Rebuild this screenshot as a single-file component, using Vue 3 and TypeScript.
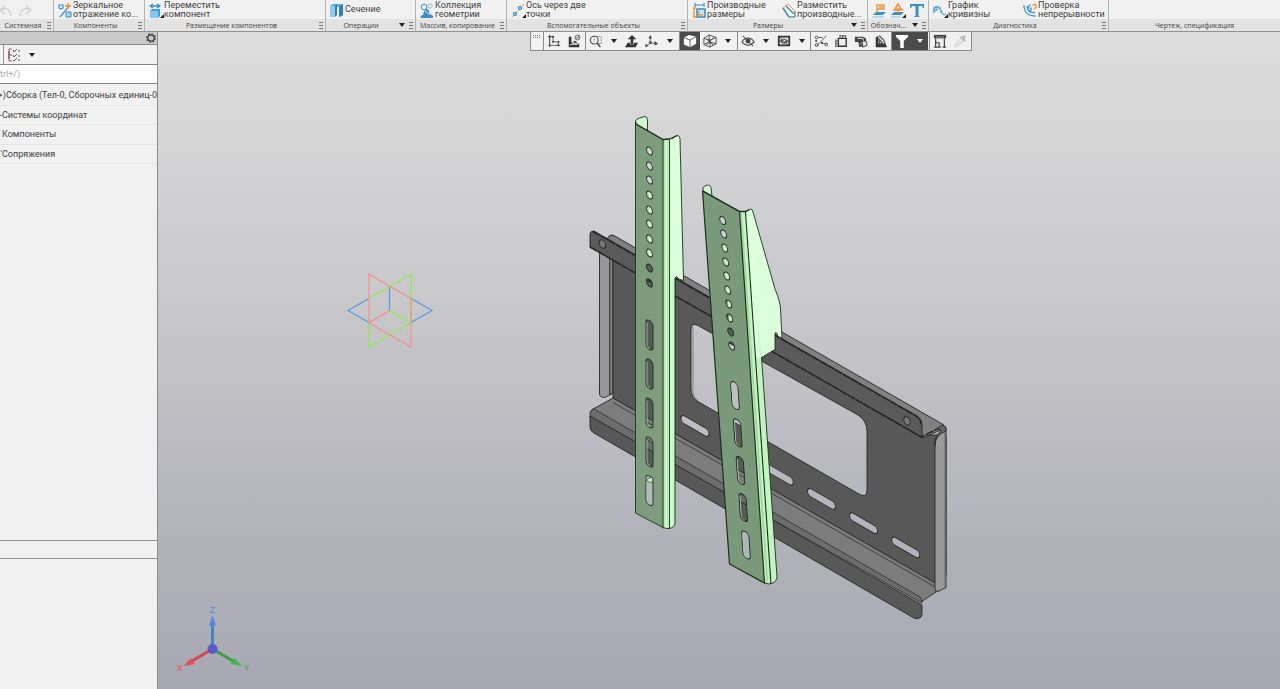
<script setup lang="ts">
import { ref } from 'vue'

interface Command { icon: string; lines: string[]; corner?: boolean }
interface Group { title: string; commands: Command[]; menu?: boolean; handle?: boolean; kind?: string }
interface Tool { icon: string; label: string; menu?: boolean; kind?: string }

const blue = '#3c8fc6'
const orange = '#f0953a'

const icons: Record<string, string> = {
  undo: '<path d="M5 4 0 8l5 4M0 8c6-3 10-1 11 6" fill="none" stroke="#cfcfcf" stroke-width="1.3"/>',
  redo: '<path d="M8 4l5 4-5 4M13 8C7 5 3 7 2 14" fill="none" stroke="#cfcfcf" stroke-width="1.3"/>',
  mirror: `<path d="M1 3h4v3l-2 1-2-1zM2 15 12 3" fill="none" stroke="${blue}" stroke-width="1.200"/><path d="M8 10h5v5H8z" fill="#a7d6ee" stroke="${blue}"/><path d="M7 4h6M10 1v6" stroke="${orange}" stroke-width="1.400"/>`,
  move: `<path d="M1 4h10M4 2 1 4l3 2M8 2l3 2-3 2" fill="none" stroke="${blue}" stroke-width="1.300"/><path d="M1 9l2-2h8v7l-2 2H1z" fill="#3c9fdb"/><path d="M1 9h8v7H1z" fill="#86c9ef"/>`,
  section: '<path d="M0 4l3-2h10v11l-3 2V5H4v10H0z" fill="#57aede"/><path d="M0 4h5v11H0z" fill="#8fcdf0"/><path d="M5 4l2-2v11l-2 2zM9 5l4-3v11l-4 2z" fill="#2f7fb4"/>',
  collection: `<circle cx="4" cy="5" r="2.800" fill="none" stroke="${blue}"/><circle cx="10" cy="4" r="2.200" fill="none" stroke="#8fbedc"/><path d="M4 9c2-4 6-1 5 2l4 3v2H1c-1-2 0-3 2-3z" fill="${blue}"/><path d="M4 8l6 5" stroke="#d3ecfa"/>`,
  axis: `<path d="M1 15 13 2" stroke="${orange}"/><circle cx="4" cy="12" r="1.700" fill="#8ecbf0" stroke="${blue}"/><circle cx="9" cy="6" r="1.700" fill="#8ecbf0" stroke="${blue}"/>`,
  derived: `<path d="M3 1v4M12 1v4M3 3h9" fill="none" stroke="${blue}" stroke-width="1.200"/><path d="M5 7h8v8H5z" fill="#c7e5f6" stroke="${blue}" stroke-width="1.600"/><path d="M1 6h3M1 15h3M2 6v9M7 9v4h4" fill="none" stroke="${orange}" stroke-width="1.400"/>`,
  place: `<path d="M1 6 6 2l7 7v6H7z" fill="#fff" stroke="${orange}"/><path d="M1 6l6 9M4 4l8 8" stroke="${blue}" stroke-width="1.500"/><path d="M7 15l6 0V9" fill="none" stroke="${blue}"/>`,
  base: `<path d="M1 13l3-3h10l-3 3z" fill="${blue}"/><path d="M0 15h12" stroke="#80bfdf"/><path d="M5 10V3h7v4H5M7 5h4" fill="none" stroke="${orange}" stroke-width="1.400"/>`,
  weld: `<path d="M0 13l3-3h10l-3 3z" fill="${blue}"/><path d="M0 15h9" stroke="#80bfdf"/><path d="M2 8h10M7 2 4 7h6zM7 8v3" fill="none" stroke="${orange}" stroke-width="1.600"/>`,
  textmark: `<path d="M0 2h14v4h-1l-1-2H8.500v10l2 1h-7l2-1V4H2L1 6H0z" fill="${blue}"/>`,
  graph: `<path d="M0 11c2-8 5-8 8-2s4 3 5 3M0 7c5-6 7 0 9 3M0 11l4-4m0-2v4m3-4 1 6" fill="none" stroke="#68abd5" stroke-width="1.300"/>`,
  check: `<path d="M1 3c0 8 4 11 12 11M4 4c0 5 3 7 8 7M8 3c-4 0-4 6-1 6h1V6H6" fill="none" stroke="${blue}" stroke-width="1.200"/><path d="M10 4c0-3 4-2 3 1l-2 2m0 2v1" fill="none" stroke="${orange}" stroke-width="1.400"/>`,
  sketch: '<path d="M3 3v10h10V9H7V3zM1 3h5M3 1v14M11 13h4" fill="none" stroke="#555"/><path d="M2 2h2v2H2zM6 2h2v2H6zM2 12h2v2H2zM12 12h2v2h-2zM6 8h2v2H6zM12 8h2v2h-2z" fill="#444"/>',
  part: '<path d="M2 3h3v6l2 2h7v4H2zM7 8h3l2 2H8z" fill="#333"/><path d="M4 12h8M4 13l1-2" stroke="#ddd"/><circle cx="12" cy="4" r="2.800" fill="none" stroke="#555"/><path d="M10 4l2 1 2-3" fill="none" stroke="#444"/>',
  zoom: '<circle cx="6" cy="7" r="4.500" fill="none" stroke="#444" stroke-width="1.200"/><path d="M9 10l4 5" stroke="#444" stroke-width="1.600"/><path d="M8 3h6v8h-3M6 5v4" fill="none" stroke="#777" stroke-dasharray="2 1"/>',
  normal: '<path d="M3 10h12l-3 5H0z" fill="#333"/><path d="M8 12V5" stroke="#eee" stroke-width="4.500"/><path d="M8 12V5" stroke="#333" stroke-width="3"/><path d="M3 6l5-5 5 5z" fill="#333"/>',
  axes: '<path d="M6 10V3M6 10l7 1M6 10l-4 4" stroke="#555" fill="none"/><path d="M4 5l2-4 2 4zM11 8l4 3-4 2zM1 11l3 2-4 2z" fill="#444"/><circle cx="6" cy="10" r="1.700" fill="#555"/>',
  cube: '<path d="M1 4 7 1l8 2v8l-7 4-7-3z" fill="#fff"/><path d="M1 4l7 3 7-4M8 7v8" fill="none" stroke="#4a4a4a"/>',
  wirecube: '<path d="M1 5 7 1l8 3v7l-7 4-7-3zM1 5l7 2 7-3M8 7v8M1 12l6-3 8 2M7 9V1M4 6l8 7M12 4 4 13" fill="none" stroke="#444"/>',
  hide: '<path d="M1 9c4-6 10-6 14 0-4 5-10 5-14 0M2 2l12 12" fill="none" stroke="#444" stroke-width="1.200"/><circle cx="8" cy="8" r="2.800" fill="#444"/>',
  show: '<path d="M2 3h12v10H2z" fill="#e8e8e8" stroke="#333" stroke-width="2"/><path d="M3 8c3-4 7-4 10 0-3 4-7 4-10 0z" fill="#555"/><circle cx="8" cy="8" r="1.700" fill="#eee"/><path d="M2 3l11 10" stroke="#333"/>',
  constraint: '<path d="M3 14 14 2M9 11h5M5 4h5" stroke="#555" fill="none"/><circle cx="3" cy="4" r="1.600" fill="none" stroke="#444"/><circle cx="2.500" cy="8" r="1.200" fill="#444"/><circle cx="3" cy="12.500" r="1.600" fill="none" stroke="#444"/><circle cx="9" cy="10" r="1.200" fill="#444"/><circle cx="14" cy="12" r="1.600" fill="none" stroke="#444"/>',
  layers: '<path d="M5 5h9v9H5z" fill="#eee" stroke="#333" stroke-width="1.500"/><path d="M7 5V2m3 3V2m3 3V2M5 8H2m3 3H2m3 3H2M6 2h8M2 6v9" stroke="#444"/>',
  package: '<path d="M1 3h9l4 2-2 8-6 2-1-6H1z" fill="#444"/><path d="M4 5h6l1 3-4 4" fill="none" stroke="#fff"/><path d="M9 8h5l1 5-5 2z" fill="#ddd" stroke="#333"/>',
  corner: '<path d="M2 4l3-2v9h8l2 4H2z" fill="#333"/><path d="M6 2l5 5 2 5M6 6l4 5H6z" fill="none" stroke="#555" stroke-width="1.500"/>',
  funnel: '<path d="M1 1h14v2l-5 5v8H6V8L1 3z" fill="#fff"/>',
  measure: '<path d="M1 1h14v4H1z" fill="#444"/><path d="M13 5v10M11 15h4M3 5v10M1 15h8M3 10h4v5" fill="none" stroke="#444" stroke-width="1.400"/><path d="M4 3v1m2-1v1m2-1v1m2-1v1m2-1v1" stroke="#ddd"/>',
  dropper: '<path d="M2 15l1-4 7-7 3 3-7 6z" fill="#e8e8e8" stroke="#ccc"/><path d="M9 3l5 5M11 5l3-3" stroke="#b8b8b8" stroke-width="2.500"/>',
}

const groups: Group[] = [
  { title: 'Системная', kind: 'system', handle: true, commands: [{ icon: 'undo', lines: [] }, { icon: 'redo', lines: [] }] },
  { title: 'Компоненты', handle: true, commands: [{ icon: 'mirror', lines: ['Зеркальное', 'отражение ко...'] }] },
  { title: 'Размещение компонентов', handle: true, commands: [{ icon: 'move', lines: ['Переместить', 'компонент'], corner: true }] },
  { title: 'Операции', handle: true, menu: true, commands: [{ icon: 'section', lines: ['Сечение'] }] },
  { title: 'Массив, копирование', handle: true, commands: [{ icon: 'collection', lines: ['Коллекция', 'геометрии'] }] },
  { title: 'Вспомогательные объекты', handle: true, commands: [{ icon: 'axis', lines: ['Ось через две', 'точки'], corner: true }] },
  { title: 'Размеры', handle: true, menu: true, kind: 'double', commands: [{ icon: 'derived', lines: ['Производные', 'размеры'] }, { icon: 'place', lines: ['Разместить', 'производные...'] }] },
  { title: 'Обознач...', handle: true, menu: true, kind: 'marks', commands: [{ icon: 'base', lines: [] }, { icon: 'weld', lines: [], corner: true }, { icon: 'textmark', lines: [] }] },
  { title: 'Диагностика', handle: true, kind: 'double', commands: [{ icon: 'graph', lines: ['График', 'кривизны'], corner: true }, { icon: 'check', lines: ['Проверка', 'непрерывности'] }] },
  { title: 'Чертеж, спецификация', commands: [] },
]

const toolSets: Tool[][] = [
  [{ icon: 'sketch', label: 'Эскиз' }, { icon: 'part', label: 'Деталь' }],
  [{ icon: 'zoom', label: 'Масштаб', menu: true }, { icon: 'normal', label: 'Нормально к' }, { icon: 'axes', label: 'Ориентация', menu: true }],
  [{ icon: 'cube', label: 'Полутоновое', kind: 'dark' }, { icon: 'wirecube', label: 'Каркас', menu: true }],
  [{ icon: 'hide', label: 'Скрыть', menu: true }, { icon: 'show', label: 'Показать', menu: true }],
  [{ icon: 'constraint', label: 'Ограничения' }, { icon: 'layers', label: 'Слои' }, { icon: 'package', label: 'Упаковка' }, { icon: 'corner', label: 'Сечение модели' }],
  [{ icon: 'funnel', label: 'Фильтр', menu: true, kind: 'dark' }],
  [{ icon: 'measure', label: 'Измерить' }, { icon: 'dropper', label: 'Пипетка' }],
]

const tree = [
  { mark: '➝)', text: 'Сборка (Тел-0, Сборочных единиц-0)' },
  { mark: '-', text: 'Системы координат' },
  { mark: '', text: 'Компоненты' },
  { mark: '′', text: 'Сопряжения' },
]

const query = ref('')

const leftHoles = [151, 166, 180, 195, 210, 224, 239, 253, 268, 283].map((y, i) => ({ x: 649.5, y, lit: i > 2 && i < 8 }))
const leftSlots = [335, 374, 413, 452, 490.5].map((y) => ({ x: 649.5, y }))
const rightHoles = [220.5, 234, 248, 262, 276, 290, 304, 318, 332, 346].map((y, i) => ({ x: 722.7 + i, y, lit: i > 1 && i < 8 }))
const rightSlots = [395.5, 433, 470.5, 507.5, 545].map((y, i) => ({ x: 735 + i * 2.75, y }))
const plateSlots = [0, 2, 3, 4, 5].map((i) => ({ x: 695 + i * 42.15, y: 426 + i * 24.3 }))
const windowPath = 'M691 330Q691 322 698 325.500L858 415Q867 421 867 431V490Q867 499 858 493.500L697 401Q691 397 691 389Z'
</script>

<template>
  <div class="app">
    <header class="ribbon">
      <section v-for="g in groups" :key="g.title" class="group" :class="g.kind">
        <div class="commands">
          <button v-for="c in g.commands" :key="c.icon" class="command" type="button" :aria-label="c.lines.join(' ') || c.icon">
            <span class="glyph">
              <svg viewBox="0 0 14 16" aria-hidden="true" v-html="icons[c.icon]"></svg>
              <i v-if="c.corner" class="corner"></i>
            </span>
            <span v-if="c.lines.length" class="caption">
              <span v-for="l in c.lines" :key="l">{{ l }}</span>
            </span>
          </button>
        </div>
        <div class="title">
          <span class="name">{{ g.title }}</span>
          <button v-if="g.menu" class="arrow" type="button" :aria-label="g.title"></button>
          <i v-if="g.handle" class="handle"></i>
        </div>
      </section>
    </header>

    <div class="body">
      <aside class="side">
        <div class="side-head">
          <button type="button" class="gear" aria-label="Настройка">
            <svg viewBox="0 0 12 12"><circle cx="6" cy="6" r="3.200" fill="none" stroke="#333" stroke-width="1.200" /><circle cx="6" cy="6" r="4.300" fill="none" stroke="#333" stroke-width="1.200" stroke-dasharray="1.500 1.877" /></svg>
          </button>
        </div>
        <div class="side-tools">
          <button type="button" class="treemode" aria-label="Вид дерева">
            <svg viewBox="0 0 14 14"><path d="M1 1v12M1 1h3M1 7h3M1 13h3" fill="none" stroke="#a55" /><path d="M1 3v8" stroke="#555" /><path d="M5 2l1 2 3-3M5 7l1 2 3-3M5 12l1 1 3-3" fill="none" stroke="#555" /><path d="M10 3h3M10 8h3M10 12h3" stroke="#555" stroke-dasharray="2 1" /></svg>
          </button>
          <button type="button" class="arrow" aria-label="Список"></button>
        </div>
        <input v-model="query" class="search" type="text" placeholder="trl+/)" aria-label="Поиск" />
        <ul class="tree">
          <li v-for="t in tree" :key="t.text"><span class="mark">{{ t.mark }}</span>{{ t.text }}</li>
        </ul>
        <div class="splitter"></div>
        <div class="props"></div>
      </aside>

      <main class="view">
        <svg class="scene" viewBox="158 32 1122 657" role="img" aria-label="Модель сборки">
          <defs>
            <linearGradient id="edgeL" x1="0" x2="1" y1="0" y2="0">
              <stop offset="0" stop-color="#8db58d" /><stop offset=".25" stop-color="#c9fcc9" /><stop offset=".5" stop-color="#b6eab6" /><stop offset=".62" stop-color="#d4ffd4" /><stop offset="1" stop-color="#bdf0bd" />
            </linearGradient>
            <mask id="plateCut" maskUnits="userSpaceOnUse" x="580" y="220" width="380" height="410">
              <path d="M580 220h380v410H580z" fill="#fff" />
              <path :d="windowPath" fill="#000" />
              <rect v-for="s in plateSlots" :key="s.x" x="-14" y="-4" width="28" height="8" rx="4" fill="#000" :transform="`translate(${s.x} ${s.y}) skewY(30)`" />
            </mask>
            <mask id="leftCut" maskUnits="userSpaceOnUse" x="630" y="110" width="60" height="430">
              <path d="M630 110h60v430h-60z" fill="#fff" />
              <ellipse v-for="h in leftHoles" :key="h.y" rx="3" ry="3.700" fill="#000" :transform="`translate(${h.x} ${h.y}) skewY(30)`" />
              <rect v-for="s in leftSlots" :key="s.y" x="-3.500" y="-14.500" width="7" height="29" rx="3.500" fill="#000" :transform="`translate(${s.x} ${s.y}) skewY(30)`" />
            </mask>
            <mask id="rightCut" maskUnits="userSpaceOnUse" x="695" y="180" width="95" height="410">
              <path d="M695 180h95v410h-95z" fill="#fff" />
              <ellipse v-for="h in rightHoles" :key="h.y" rx="3" ry="3.700" fill="#000" :transform="`translate(${h.x} ${h.y}) skewY(30)`" />
              <rect v-for="s in rightSlots" :key="s.y" x="-3.500" y="-13.500" width="7" height="27" rx="3.500" fill="#000" :transform="`translate(${s.x} ${s.y}) rotate(-4) skewY(30)`" />
            </mask>
          </defs>

          <!-- origin planes -->
          <g fill="none" stroke-width="1.200">
            <path d="M369 298.500 348 310.500l21 12M411 298.500l21 12-21 12M389.500 286v24.500" stroke="#559be8" />
            <path d="M369 298.500 411 274v49l-42 24v-24M389.500 310.500l21.500 12.500" stroke="#8fec48" />
            <path d="M369 323V274l42 24.500V347l-42-24 20.500-12.500" stroke="#f58f8f" />
          </g>

          <!-- wall plate -->
          <g stroke="#262626" stroke-width=".9" stroke-linejoin="round">
            <path d="M599.500 250v144q1 4 5 3.500l8-4V255z" fill="#969696" />
            <path d="M609.500 255v139.500l3.500-1.500V257z" fill="#787878" stroke-width=".7" />
            <g mask="url(#plateCut)">
              <path d="M613 257l308 178h25v140l-11 8.500L613 398z" fill="#585858" />
            </g>
            <path :d="windowPath" fill="none" />
            <path d="M693 327v64q0 6 5 9.500" fill="none" stroke="#666" stroke-width=".7" />
            <rect v-for="s in plateSlots" :key="s.x" x="-14" y="-4" width="28" height="8" rx="4" fill="none" :transform="`translate(${s.x} ${s.y}) skewY(30)`" />
            <path d="M607 239q2-5 6-4l331 190-3 5-19 8z" fill="#808080" />
            <path d="M590 234q0-3 4-3l323 185q5 3 5 8v13L590 247z" fill="#5a5a5a" />
            <path d="M593 231.500 917 416.500q4 3 4 8" fill="none" stroke-width="1.500" stroke-dasharray="8 1" />
            <path d="M590 247 921 437l22-11" fill="none" stroke-width="1.500" stroke-dasharray="8 1" />
            <ellipse rx="3.200" ry="4" fill="#777" transform="translate(602.500 244) skewY(25)" />
            <ellipse rx="3.200" ry="4" fill="#777" transform="translate(907 421) skewY(25)" />
            <path d="M613 398 936 583.500V592l-15 10L590 413q1-4 5-5z" fill="#7c7c7c" />
            <path d="M613 402.500 936 587.500" fill="none" stroke-width=".7" />
            <path d="M590 413q1-3 4-4L920 597q2 2 2 5v1L590 418z" fill="#6c6c6c" stroke-width=".7" />
            <path d="M590 416 917 602q4 2 5 3v10q-2 5-8 3L594 433q-4-2-4-6z" fill="#585858" />
            <path d="M935 584V440q1-6 6-8l5-3v158.500l-8 4q-3 0-3-3z" fill="#999" />
            <path d="M945 430v157" stroke="#666" />
            <path d="M935 446q0-11 11-15v-4l-4-2-5 4q4 0 4 2-5 3-6 10" fill="#666" />
          </g>

          <!-- left bracket -->
          <g stroke="#1d301d" stroke-width=".9" stroke-linejoin="round">
            <path d="M635.500 128v-7q1-2 4-3l5-1.500q2.500 0 3 3V130z" fill="#cff8cf" />
            <path d="M670 140l7-4.500q2.500 0 3 3l3.500 142-5-1.500q-2-4-3.500-1V300H670z" fill="#dcffdc" />
            <path d="M662.500 139.500h7q5-1 5.500 3v382q-2 5-8 4.500l-4.500-1z" fill="url(#edgeL)" stroke="none" />
            <path d="M669 139h7l-1 139h-6z" fill="#dcffdc" stroke="none" />
            <path d="M669.500 140v389M675 278v246q-2 5-8 4.500l-5-1" fill="none" />
            <g mask="url(#leftCut)">
              <path d="M635.500 124 663 139.500v388L635.500 513z" fill="#7d9c7d" />
            </g>
            <path d="M636 122v2l27 15.500 7-.500 7-3.500" fill="none" stroke-width="1.300" />
            <g v-for="h in leftHoles" :key="h.y" :transform="`translate(${h.x} ${h.y}) skewY(30)`">
              <path v-if="h.lit" d="M-1-3.500Q3-3 3 0T-1 3.500z" fill="#c4f2c4" stroke="none" />
              <ellipse rx="3" ry="3.700" fill="none" />
            </g>
            <rect v-for="s in leftSlots" :key="s.y" x="-3.500" y="-14.500" width="7" height="29" rx="3.500" fill="none" :transform="`translate(${s.x} ${s.y}) skewY(30)`" />
            <path v-for="s in leftSlots" :key="'t' + s.y" d="M-2.500-11v22q0 2 3 2.500" fill="none" stroke="#a9d2a9" stroke-width=".8" :transform="`translate(${s.x} ${s.y}) skewY(30)`" />
            <path d="M647 479l6-2-1 6-5-2z" fill="#c5f5c5" stroke-width=".6" />
          </g>

          <!-- right bracket -->
          <g stroke="#1d301d" stroke-width=".9" stroke-linejoin="round">
            <path d="M703 193v-5q1-2 3-2.500 4-1.500 5 2l1 9z" fill="#cff8cf" />
            <path d="M745.500 212l5-3q2 0 2.500 3l22 77q5 12 5.500 20l1.500 29-4-1.500q-2-6-3-3v16l-13.500 8L756 362z" fill="#dcffdc" />
            <path d="M739 211.500h7.500L761.500 357 777 577q0 4-4 6-4 2-9 0z" fill="#c3f5c3" stroke="none" />
            <path d="M761.500 357 777 577q0 4-4 6-4 2-9 0" fill="none" />
            <path d="M741 213 767.500 583" fill="none" stroke="#a5d8a5" stroke-width="2" />
            <path d="M745 212h5l10 145h-5z" fill="#dcffdc" stroke="none" />
            <path d="M745.500 212 771 584" fill="none" stroke-width="1.100" />
            <g mask="url(#rightCut)">
              <path d="M702.500 191 739.500 211.500 764.500 583 729.500 564z" fill="#7a997a" stroke-width="1.200" />
            </g>
            <path d="M703 191l36.500 20.500h6l4-2" fill="none" stroke-width="1.300" />
            <g v-for="h in rightHoles" :key="h.y" :transform="`translate(${h.x} ${h.y}) skewY(30)`">
              <path v-if="h.lit" d="M-1-3.500Q3-3 3 0T-1 3.500z" fill="#c4f2c4" stroke="none" />
              <ellipse rx="3" ry="3.700" fill="none" />
            </g>
            <g v-for="s in rightSlots" :key="s.y" :transform="`translate(${s.x} ${s.y}) rotate(-4) skewY(30)`">
              <rect x="-3.500" y="-13.500" width="7" height="27" rx="3.500" fill="none" />
              <path d="M-2.500-10v20q0 2 3 2.500" fill="none" stroke="#a9d2a9" stroke-width=".8" />
            </g>
          </g>

          <!-- axis triad -->
          <g stroke-width="3" class="triad">
            <path d="M212.500 649V624" stroke="#3f87c4" /><path d="M212.500 615l3.500 10.500h-7z" fill="#5488dd" />
            <path d="M212.500 649 192 661" stroke="#d5484d" /><path d="M183.500 666l7.500-8 4 6z" fill="#dc5358" />
            <path d="M212.500 649 233 661" stroke="#3fa046" /><path d="M242 666l-7.500-8-4 6z" fill="#43b34c" />
            <circle cx="212.500" cy="649" r="5" fill="#5a58c8" />
            <text x="212.500" y="613" fill="#5c86dd">Z</text>
            <text x="179.500" y="671" fill="#dc5055">X</text>
            <text x="246.500" y="671" fill="#45a84d">Y</text>
          </g>
        </svg>

        <div class="quickbar" role="toolbar">
          <i class="grip"></i>
          <div v-for="(set, i) in toolSets" :key="i" class="set">
            <template v-for="t in set" :key="t.icon">
              <button type="button" class="tool" :class="t.kind" :aria-label="t.label"><svg viewBox="0 0 16 16" v-html="icons[t.icon]"></svg></button>
              <button v-if="t.menu" type="button" class="arrow" :class="t.kind" :aria-label="t.label + ' меню'"></button>
            </template>
          </div>
        </div>
      </main>
    </div>
  </div>
</template>

<style>
body { margin: 0; }
</style>

<style scoped>
.app {
  display: flex;
  flex-direction: column;
  height: 100vh;
  overflow: hidden;
  font-family: Roboto, "Noto Sans", sans-serif;
  font-size: 9px;
  color: #3f3f3f;
  background: #f1f1f1;
}
button { padding: 0; border: 0; background: none; font: inherit; color: inherit; }
svg { display: block; }

.ribbon {
  display: grid;
  grid-template-columns: 54px 91px 181px 90px 91px 181px 180px 61px 180px 1fr;
  border-bottom: 1px solid #919191;
  flex: none;
}
.group { border-right: 1px solid #b4b4b4; min-width: 0; }
.group:last-child { border-right: 0; }
.commands { display: flex; height: 19px; padding-left: 4px; }
.command { display: flex; align-items: center; gap: 1px; height: 19px; text-align: left; }
.double .command { flex: 0 0 90px; }
.glyph { position: relative; flex: none; }
.glyph svg { width: 14px; height: 16px; }
.corner {
  position: absolute;
  right: -1px;
  bottom: 0;
  border-left: 4px solid transparent;
  border-bottom: 4px solid #222;
}
.caption { display: flex; flex-direction: column; line-height: 9px; white-space: nowrap; }
.system .commands { padding: 0; gap: 4px; }
.marks .commands { gap: 5px; }

.title {
  display: flex;
  align-items: center;
  height: 12px;
  background: #e3e3e3;
  font-family: "Open Sans", "Noto Sans", sans-serif;
  font-size: 7px;
  line-height: 10px;
  white-space: nowrap;
}
.name { flex: 1; padding-top: 2px; text-align: center; }
.arrow { display: flex; align-items: center; justify-content: center; width: 12px; }
.arrow::before {
  content: "";
  border: 3px solid transparent;
  border-top: 4px solid #222;
  border-bottom: 0;
}
.handle {
  width: 4px;
  height: 8px;
  margin: 0 2px 0 1px;
  background: radial-gradient(circle, #777 1px, transparent 1px) 0 0 / 2px 3px;
}

.body { display: flex; flex: 1; min-height: 0; }
.side {
  display: flex;
  flex-direction: column;
  width: 158px;
  flex: none;
  box-sizing: border-box;
  border-right: 1px solid #8b8b8b;
  overflow: hidden;
}
.side-head { display: flex; justify-content: flex-end; height: 12px; background: #c9c9c9; border-bottom: 1px solid #8d8d8d; }
.gear svg { width: 12px; height: 12px; }
.side-tools { display: flex; align-items: center; height: 19px; margin-left: 3px; border-left: 1px solid #999; padding-left: 4px; gap: 4px; }
.treemode svg { width: 14px; height: 14px; }
.search {
  height: 20px;
  box-sizing: border-box;
  width: 100%;
  padding: 0;
  border: solid #858585;
  border-width: 1px 0;
  background: #fff;
  font: inherit;
  color: #333;
  outline: 0;
}
.search::placeholder { color: #a9a9a9; }
.tree {
  display: grid;
  grid-auto-rows: 1fr;
  height: 78px;
  margin: 2px 0 0;
  padding: 0;
  list-style: none;
}
.tree li { display: flex; align-items: center; white-space: nowrap; border-bottom: 1px solid #e4e4e4; box-sizing: border-box; }
.mark { flex: none; width: 2px; display: flex; justify-content: flex-end; }
.tree li:first-child .mark { width: 6px; }
.splitter { margin-top: auto; height: 17px; border: solid #929292; border-width: 1px 0; }
.props { flex: 0 0 130px; }

.view {
  position: relative;
  flex: 1;
  min-width: 0;
  background: linear-gradient(#dddddd 0%, #c8c8cb 42%, #b3b3bb 75%, #a8a8b3 100%);
}
.scene { width: 100%; height: 100%; }
.triad path:not([stroke]), .triad circle { stroke: none; }
.triad text { font: 9px "Liberation Sans", sans-serif; text-anchor: middle; }

.quickbar {
  position: absolute;
  top: 0;
  left: 372px;
  display: flex;
  height: 18px;
  border: 1px solid #8a8a8a;
  border-top: 0;
  background: #f1f1f1;
}
.grip {
  width: 12px;
  background: repeating-linear-gradient(90deg, #777 0 1px, transparent 1px 2px) 2px 3px / 8px 1px no-repeat, repeating-linear-gradient(90deg, #777 0 1px, transparent 1px 2px) 2px 5px / 8px 1px no-repeat;
}
.set { display: flex; padding-right: 1px; border-left: 1px solid #8a8a8a; }
.set:nth-of-type(4), .set:nth-of-type(5) { padding-right: 0; }
.tool { display: flex; align-items: center; justify-content: center; width: 20px; }
.tool svg { width: 14px; height: 14px; }
.quickbar .arrow { width: 16px; }
.dark { background: #4b4b4b; }
.arrow.dark::before { border-top-color: #fff; }
</style>
